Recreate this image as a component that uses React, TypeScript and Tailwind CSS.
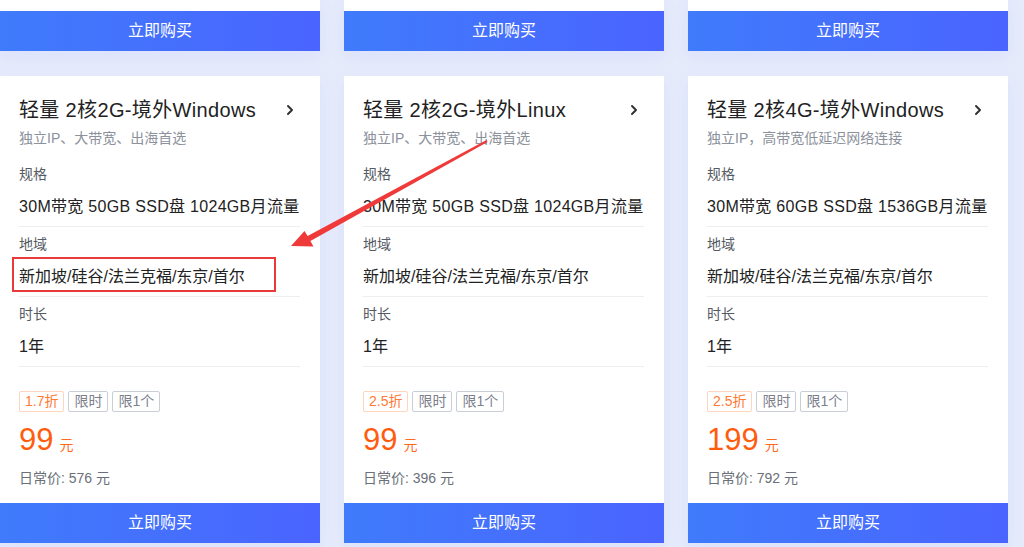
import { ChevronRight } from "lucide-react";

const PLANS = [
  {
    title: "轻量 2核2G-境外Windows",
    sub: "独立IP、大带宽、出海首选",
    spec: "30M带宽 50GB SSD盘 1024GB月流量",
    discount: "1.7折",
    price: "99",
    old: "576",
  },
  {
    title: "轻量 2核2G-境外Linux",
    sub: "独立IP、大带宽、出海首选",
    spec: "30M带宽 50GB SSD盘 1024GB月流量",
    discount: "2.5折",
    price: "99",
    old: "396",
  },
  {
    title: "轻量 2核4G-境外Windows",
    sub: "独立IP，高带宽低延迟网络连接",
    spec: "30M带宽 60GB SSD盘 1536GB月流量",
    discount: "2.5折",
    price: "199",
    old: "792",
  },
];

const FONT = { fontFamily: '"Liberation Sans", "Noto Sans CJK SC", sans-serif' };

function BuyButton() {
  return (
    <button className="flex h-10 w-full items-center justify-center bg-gradient-to-r from-[#3f7bfb] to-[#4a64ff] text-base text-white">
      立即购买
    </button>
  );
}

function Row({ label, value, wide }: { label: string; value: string; wide?: boolean }) {
  return (
    <div className="border-b border-[#eceef2] pt-[7px] pb-[7px]">
      <p className="text-sm leading-5 text-[#555a63]">{label}</p>
      <p
        className={`mt-[11px] text-base leading-6 whitespace-nowrap text-[#222] ${wide ? "tracking-[0.3px]" : ""}`}
      >
        {value}
      </p>
    </div>
  );
}

function PlanCard({ plan }: { plan: (typeof PLANS)[number] }) {
  return (
    <div className="flex w-[320px] flex-col bg-white shadow-[0_6px_16px_rgba(80,110,255,0.08)]">
      <div className="pt-5 pr-5 pl-[19px]">
        <div className="flex h-7 items-center justify-between">
          <span className="text-[20px] leading-7 tracking-[0.35px] text-[#222]">{plan.title}</span>
          <ChevronRight className="mr-0.5 h-4 w-4 text-[#333]" strokeWidth={3} />
        </div>
        <p className="mt-1 text-sm leading-5 text-[#8c919c]">{plan.sub}</p>

        <div className="mt-[9px]">
          <Row label="规格" value={plan.spec} wide />
          <Row label="地域" value="新加坡/硅谷/法兰克福/东京/首尔" />
          <Row label="时长" value="1年" />
        </div>

        <div className="mt-6 flex gap-1">
          <span className="h-[21px] rounded-[2px] border border-[#ffd6bd] px-[5px] text-sm leading-[19px] text-[#ff7a36]">
            {plan.discount}
          </span>
          <span className="h-[21px] rounded-[2px] border border-[#c9cdd6] px-[5px] text-sm leading-[19px] text-[#7b808c]">
            限时
          </span>
          <span className="h-[21px] rounded-[2px] border border-[#c9cdd6] px-[5px] text-sm leading-[19px] text-[#7b808c]">
            限1个
          </span>
        </div>

        <div className="mt-[10px] flex items-baseline">
          <span className="text-[31px] leading-9 text-[#ff5c0e]">{plan.price}</span>
          <span className="ml-1.5 text-sm text-[#ff6a1f]">元</span>
        </div>
        <p className="mt-[10px] text-sm leading-5 text-[#6b6f78]">日常价: {plan.old} 元</p>
      </div>
      <div className="mt-[15px]">
        <BuyButton />
      </div>
    </div>
  );
}

export default function App() {
  return (
    <div className="relative h-[547px] w-[1024px] overflow-hidden bg-[#e6ebfb]" style={FONT}>
      {/* tail of the row above */}
      <div className="flex gap-6">
        {PLANS.map((p) => (
          <div key={p.title} className="w-[320px] shadow-[0_6px_16px_rgba(80,110,255,0.08)]">
            <div className="h-[11px] bg-white" />
            <BuyButton />
          </div>
        ))}
      </div>

      <div className="mt-[25px] flex gap-6">
        {PLANS.map((p) => (
          <PlanCard key={p.title} plan={p} />
        ))}
      </div>

      {/* annotation */}
      <div className="absolute top-[257px] left-[12px] h-[35px] w-[264px] border-2 border-[#e83a3a]" />
      <svg className="pointer-events-none absolute inset-0" width="1024" height="547">
        <polygon
          points="291,246 313.5,246.5 310.4,241.1 487.5,141.9 486.5,140.1 307.6,235.9 304.5,231"
          fill="#f03a3a"
        />
      </svg>
    </div>
  );
}
